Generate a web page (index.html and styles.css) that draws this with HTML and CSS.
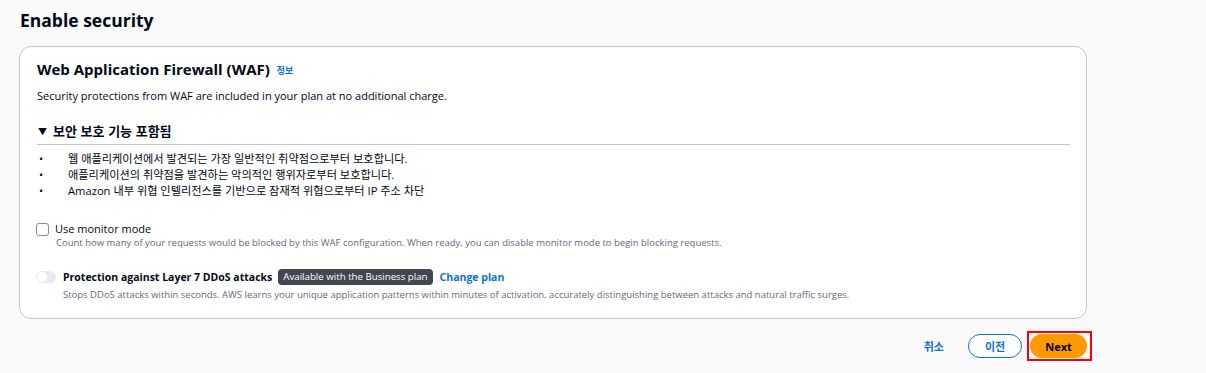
FILE: index.html
```html
<!DOCTYPE html>
<html lang="ko">
<head>
  <meta charset="UTF-8">
  <title>Enable security</title>
  <link rel="stylesheet" href="styles.css">
</head>
<body>
  <div class="page">
    <h1 class="page-title">Enable security</h1>

    <div class="card">
      <h2 class="card-title">Web Application Firewall (WAF) <a class="info-link" href="#">정보</a></h2>
      <p class="card-desc">Security protections from WAF are included in your plan at no additional charge.</p>

      <div class="expander">
        <div class="expander-head"><span class="caret">▼</span>보안 보호 기능 포함됨</div>
        <ul class="feature-list">
          <li>웹 애플리케이션에서 발견되는 가장 일반적인 취약점으로부터 보호합니다.</li>
          <li>애플리케이션의 취약점을 발견하는 악의적인 행위자로부터 보호합니다.</li>
          <li>Amazon 내부 위협 인텔리전스를 기반으로 잠재적 위협으로부터 IP 주소 차단</li>
        </ul>
      </div>

      <div class="option">
        <label class="check-row"><span class="checkbox"></span>Use monitor mode</label>
        <div class="option-desc check-desc">Count how many of your requests would be blocked by this WAF configuration. When ready, you can disable monitor mode to begin blocking requests.</div>
      </div>

      <div class="option toggle-option">
        <div class="toggle-row">
          <span class="toggle"><span class="knob"></span></span>
          <span class="toggle-label">Protection against Layer 7 DDoS attacks</span>
          <span class="badge">Available with the Business plan</span>
          <a class="change-link" href="#">Change plan</a>
        </div>
        <div class="option-desc toggle-desc">Stops DDoS attacks within seconds. AWS learns your unique application patterns within minutes of activation, accurately distinguishing between attacks and natural traffic surges.</div>
      </div>
    </div>

    <div class="actions">
      <a class="btn-link" href="#">취소</a>
      <button class="btn btn-secondary">이전</button>
      <span class="highlight"><button class="btn btn-primary">Next</button></span>
    </div>
  </div>
</body>
</html>
```

FILE: styles.css
```css
body {
  margin: 0;
  background: #fafafa;
  color: #000716;
  font-family: 'Open Sans', 'Noto Sans CJK KR', sans-serif;
}

.page {
  width: 1068px;
  padding-left: 19px;
}

.page-title {
  margin: 0;
  padding: 8px 0 0 1px;
  font-size: 17.5px;
  line-height: 24px;
  font-weight: 700;
}

.card {
  margin-top: 14px;
  background: #fff;
  border: 1px solid #c6c6cd;
  border-radius: 12px;
  padding: 12px 16px 16px 17px;
}

.card-title {
  margin: 0;
  font-size: 15px;
  line-height: 20px;
  font-weight: 700;
}

.info-link {
  margin-left: 3px;
  font-size: 9px;
  font-weight: 700;
  color: #0972d3;
  text-decoration: none;
  vertical-align: 1px;
}

.card-desc {
  margin: 7px 0 0;
  font-size: 11px;
  line-height: 16px;
}

.expander {
  margin-top: 17px;
}

.expander-head {
  font-family: 'Noto Sans CJK KR', sans-serif;
  font-size: 13px;
  line-height: 20px;
  font-weight: 700;
  padding-bottom: 2px;
  border-bottom: 1px solid #c6c6cd;
}

.caret {
  font-size: 9px;
  margin: 0 6px 0 1px;
  vertical-align: 1px;
}

.feature-list {
  list-style: none;
  margin: 6px 0 0;
  padding-left: 2px;
  font-size: 11.2px;
  line-height: 16px;
}

.feature-list li::before {
  content: "•";
  display: inline-block;
  width: 29px;
}

.option {
  margin-top: 23px;
}

.check-row {
  display: flex;
  align-items: center;
  gap: 6px;
  font-size: 11px;
  line-height: 14px;
  margin-left: -1px;
}

.checkbox {
  width: 11px;
  height: 11px;
  border: 1px solid #8c8c94;
  border-radius: 3px;
  background: #fff;
}

.option-desc {
  font-size: 9.5px;
  line-height: 14px;
  color: #5f6b7a;
}

.check-desc {
  padding-left: 19px;
}

.toggle-option {
  margin-top: 18px;
}

.toggle-row {
  display: flex;
  align-items: center;
  height: 18px;
  margin-left: -1px;
}

.toggle {
  display: flex;
  align-items: center;
  width: 20px;
  height: 12px;
  border-radius: 6px;
  background: #e9ebed;
  padding: 0 1px;
  box-sizing: border-box;
  margin-right: 7px;
}

.knob {
  width: 10px;
  height: 10px;
  border-radius: 50%;
  background: #fff;
}

.toggle-label {
  font-size: 10.5px;
  font-weight: 700;
}

.badge {
  margin-left: 6px;
  background: #424650;
  color: #fff;
  font-size: 9.7px;
  line-height: 16px;
  padding: 0 5px;
  border-radius: 4px;
}

.change-link {
  margin-left: 7px;
  color: #0972d3;
  font-size: 10.5px;
  font-weight: 700;
  text-decoration: none;
}

.toggle-desc {
  margin-top: 2px;
  padding-left: 26px;
}

.actions {
  display: flex;
  justify-content: flex-end;
  align-items: center;
  margin-top: 12px;
  margin-right: -5px;
}

.btn-link {
  color: #0972d3;
  font-family: 'Noto Sans CJK KR', sans-serif;
  font-size: 11px;
  font-weight: 700;
  text-decoration: none;
  margin-right: 24px;
}

.btn {
  height: 24px;
  border-radius: 12px;
  font-family: 'Open Sans', 'Noto Sans CJK KR', sans-serif;
  font-size: 11px;
  font-weight: 700;
  cursor: pointer;
}

.btn-secondary {
  width: 54px;
  background: #fff;
  color: #0972d3;
  border: 1.5px solid #0972d3;
  margin-right: 5px;
}

.highlight {
  display: flex;
  border: 2px solid #ff0000;
  padding: 1px 3px 1px 1px;
}

.btn-primary {
  width: 57px;
  background: #ff9900;
  color: #000716;
  border: none;
}
```
